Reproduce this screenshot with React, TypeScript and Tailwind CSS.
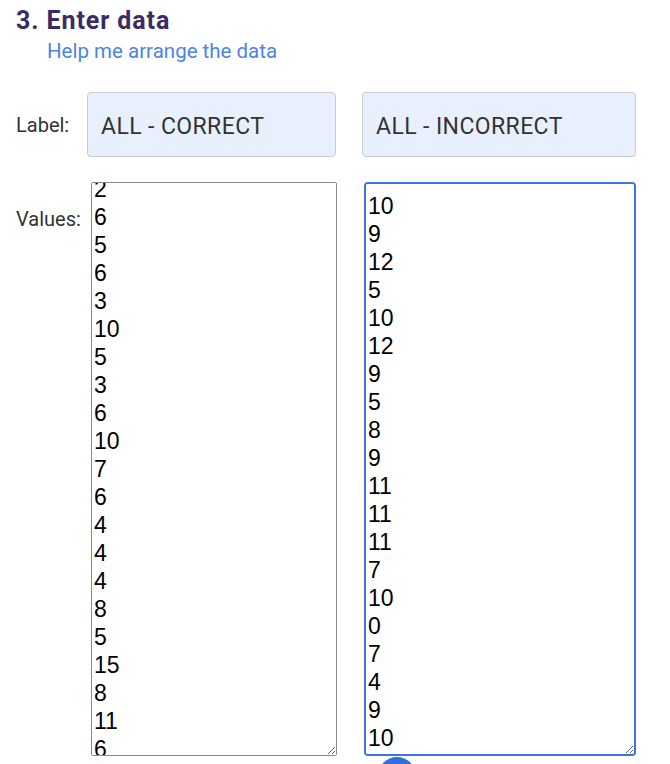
import { useEffect, useRef } from 'react'

const correct = ['2', '6', '5', '6', '3', '10', '5', '3', '6', '10', '7', '6', '4', '4', '4', '8', '5', '15', '8', '11', '6', '9', '7', '5']
const incorrect = ['10', '9', '12', '5', '10', '12', '9', '5', '8', '9', '11', '11', '11', '7', '10', '0', '7', '4', '9', '10', '8']

export default function App() {
  const leftRef = useRef<HTMLTextAreaElement>(null)

  useEffect(() => {
    if (leftRef.current) leftRef.current.scrollTop = 16
  }, [])

  return (
    <div className="w-[670px] h-[764px] overflow-hidden bg-white font-['Roboto',sans-serif]">
      <h2 className="pl-4 pt-[5px] text-[25px] font-bold leading-[32px] tracking-[0.9px] text-[#3b2b63]">
        3. Enter data
      </h2>
      <a href="#" className="block mt-[1px] ml-[47px] text-[20.5px] leading-[26px] text-[#4c84e6]">
        Help me arrange the data
      </a>

      <div className="flex items-center mt-[28px] pl-4">
        <span className="w-[71px] text-[20px] text-[#333]">Label:</span>
        <input
          type="text"
          defaultValue="ALL - CORRECT"
          className="w-[249px] h-[65px] px-[13px] pt-[3px] rounded-[4px] border border-[#c9ccd1] bg-[#e8f0fe] text-[23px] tracking-[0.4px] text-[#333] outline-none"
        />
        <input
          type="text"
          defaultValue="ALL - INCORRECT"
          className="ml-[26px] w-[274px] h-[65px] px-[13px] pt-[3px] rounded-[4px] border border-[#c9ccd1] bg-[#e8f0fe] text-[23px] tracking-[0.4px] text-[#333] outline-none"
        />
      </div>

      <div className="flex items-start mt-[25px] pl-4">
        <span className="w-[75px] pt-[22px] text-[20px] text-[#333]">Values:</span>
        <textarea
          ref={leftRef}
          readOnly
          value={correct.join('\n')}
          className="w-[246px] h-[574px] px-[2px] pt-[8px] rounded-[2px] border border-[#8a8a8a] bg-white font-['Liberation_Sans',Arial,sans-serif] text-[23px] leading-[28px] text-black outline-none resize-y"
        />
        <textarea
          readOnly
          value={incorrect.join('\n')}
          className="ml-[27px] w-[272px] h-[574px] px-[2px] pt-[8px] rounded-[4px] border-2 border-[#3b74dc] bg-white font-['Liberation_Sans',Arial,sans-serif] text-[23px] leading-[28px] text-black outline-none resize-y"
        />
      </div>

      <div className="ml-[378px] mt-[1px] w-[38px] h-[38px] rounded-full bg-[#2f6fe0]" />
    </div>
  )
}
